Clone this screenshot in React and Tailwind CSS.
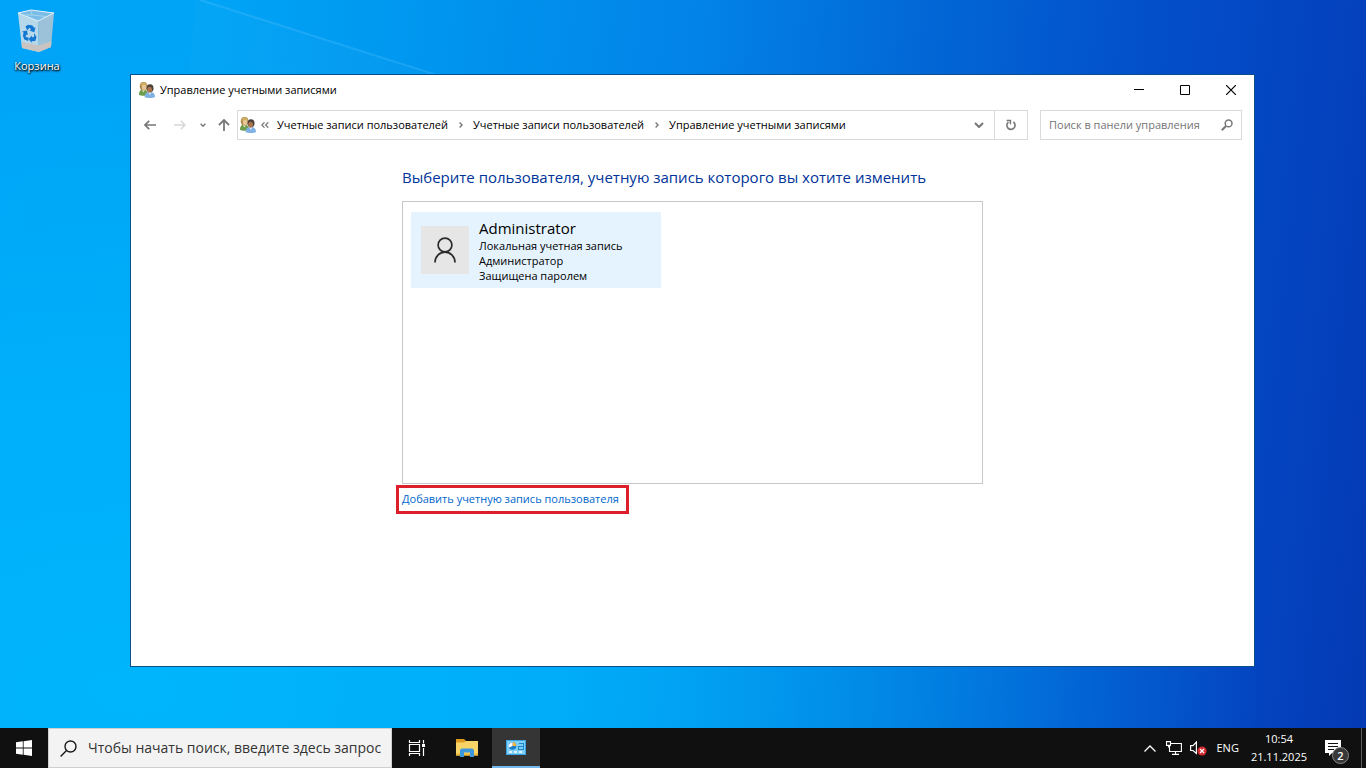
import React from "react";

const crumbs = [
  "Учетные записи пользователей",
  "Учетные записи пользователей",
  "Управление учетными записями",
];

const UsersIcon = () => (
  <svg viewBox="0 0 16 16" className="w-4 h-4 shrink-0">
    <path d="M0 13c0-3.800 1.200-5.600 4.300-5.600S8.800 9.200 8.800 13c-2.200 1-6.600 1-8.800 0z" fill="#6d9c4c" />
    <path d="M2.500 7.800l2 2.700 1.700-2.800z" fill="#d9e8c8" />
    <ellipse cx="4.600" cy="4.200" rx="3.800" ry="4.200" fill="#a98444" />
    <ellipse cx="5.200" cy="5.200" rx="2.400" ry="2.900" fill="#e6c496" />
    <path d="M1.200 3.800C1.500 1.200 2.900.2 4.800.2c1.800 0 3 1 3.300 3-1.800.3-2.900-.4-3.600-.8-.5.8-1.900 1.500-3.300 1.400z" fill="#cdae62" />
    <path d="M5.600 15.200c0-3.700 1.700-5.200 5.200-5.200s5.200 1.500 5.200 5.200c-2.400 1-8 1-10.400 0z" fill="#7fb0e2" />
    <path d="M9.200 10.100l1.700 3 1.600-3z" fill="#e6f1fb" />
    <ellipse cx="11" cy="6.300" rx="3.500" ry="4" fill="#4b4038" />
    <ellipse cx="10.600" cy="7.700" rx="2.400" ry="2.900" fill="#a9744e" />
  </svg>
);

const RecycleBin = () => (
  <svg viewBox="0 0 40 44" className="w-10 h-11">
    <path d="M1 4L14 1l23 3-13 5z" fill="#8ecbf0" />
    <path d="M1 4l20 8 1 31L5 39z" fill="#b7d7eb" />
    <path d="M21 12l16-8-3 34-12 5z" fill="#9cc2da" />
    <path d="M4.500 33L22 36.500 34.500 32l-.5 6-12 5-17-4z" fill="#c9c4c2" />
    <path d="M1 4L14 1l23 3-16 8z" fill="#79bde6" stroke="#e4f3fb" />
    <path d="M14 1.500l1 4.500-8 0M15 6l14 1.500" stroke="#a5d5ef" fill="none" />
    <g fill="#1277d3">
      <path d="M8.500 17.500l2.500-1.700 4.500.7 1.500 2.300 1.500-.5-1.200 5-4.800-1.800 1.500-.8-1.500-2.200-2.200 3z" />
      <path d="M5 22.500l5-1 .8 4.500-1.300-.6-1 2.300 3.200 1-.4 3.200-4-1.300-1.400-3.800.7-3.300z" />
      <path d="M17 24l2.500 4-1.200 4-3.600.3v1.600l-3-3.800 3.200-3.600v1.700l2.200-.1z" />
    </g>
  </svg>
);

const Chevron = ({ className, d = "M1 1l4 4 4-4", box = "0 0 10 6", width = 2 }) => (
  <svg viewBox={box} className={className} fill="none" stroke="currentColor" strokeWidth={width}>
    <path d={d} />
  </svg>
);

const TitleBar = () => (
  <header className="flex items-center h-[30px] pl-2">
    <UsersIcon />
    <h1 className="ml-[5px] text-[11px] leading-4">Управление учетными записями</h1>
    <div className="flex ml-auto h-full">
      <button aria-label="Свернуть" className="w-[46px] flex items-center justify-center hover:bg-gray-200">
        <svg viewBox="0 0 10 10" className="w-[10px] h-[10px]">
          <path d="M0 4.500h10" stroke="#000" />
        </svg>
      </button>
      <button aria-label="Развернуть" className="w-[46px] flex items-center justify-center hover:bg-gray-200">
        <svg viewBox="0 0 10 10" className="w-[10px] h-[10px]" fill="none">
          <path d="M.5.5h9v9h-9z" stroke="#000" />
        </svg>
      </button>
      <button aria-label="Закрыть" className="w-[46px] flex items-center justify-center hover:bg-red-600">
        <svg viewBox="0 0 10 10" className="w-[10px] h-[10px]">
          <path d="M0 0l10 10M10 0L0 10" stroke="#000" strokeWidth="1.200" />
        </svg>
      </button>
    </div>
  </header>
);

const NavBar = () => (
  <nav className="flex items-center mt-[5px] pl-[13px] pr-3 h-[30px] text-[#777]">
    <button aria-label="Назад" className="w-3">
      <svg viewBox="0 0 12 10" className="w-3 h-[10px]" fill="none" stroke="currentColor" strokeWidth="1.700">
        <path d="M12 5H1M5.200.8L1 5l4.200 4.200" />
      </svg>
    </button>
    <button aria-label="Вперед" className="w-3 ml-[18px] text-[#d8d8d8]">
      <svg viewBox="0 0 12 10" className="w-3 h-[10px]" fill="none" stroke="currentColor" strokeWidth="1.500">
        <path d="M0 5h11M6.800.8L11 5 6.800 9.200" />
      </svg>
    </button>
    <button aria-label="Последние расположения" className="w-[6px] ml-[14px]">
      <Chevron className="w-[6px] h-1" width={2.400} />
    </button>
    <button aria-label="Вверх" className="w-3 ml-3">
      <svg viewBox="0 0 12 12" className="w-3 h-3" fill="none" stroke="currentColor" strokeWidth="1.800">
        <path d="M6 12V1M1 6l5-5 5 5" />
      </svg>
    </button>

    {/* Address bar */}
    <div className="flex flex-1 items-center h-full ml-[7px] border border-[#d9d9d9]">
      <div className="flex items-center ml-[2px]">
        <UsersIcon />
        <svg viewBox="0 0 8 6" className="w-2 h-[6px] ml-[5px] mr-2" fill="none" stroke="currentColor" strokeWidth="1.200">
          <path d="M3.500.3L.8 3l2.700 2.700M7.300.3L4.600 3l2.700 2.700" />
        </svg>
      </div>
      <ol className="flex items-center text-[11px] leading-4 text-black">
        {crumbs.map((crumb, i) => (
          <li key={i} className="flex items-center">
            {i > 0 && (
              <Chevron className="w-1 h-[6px] ml-[11px] mr-[10px] text-[#777]" box="0 0 4 6" d="M.6.5L3.100 3 .6 5.500" width={1.400} />
            )}
            <a href="#">{crumb}</a>
          </li>
        ))}
      </ol>
      <button aria-label="Предыдущие расположения" className="ml-auto w-[30px] h-full flex items-center justify-center">
        <Chevron className="w-[10px] h-[6px]" />
      </button>
      <button aria-label="Обновить" className="w-[33px] h-full flex items-center justify-center border-l border-[#d9d9d9]">
        <svg viewBox="0 0 10 12" className="w-[10px] h-3" fill="none" stroke="currentColor" strokeWidth="1.600">
          <path d="M7.400 3A4.100 4.100 0 1 1 2.400 3.100" />
          <path d="M.6 1.500h3.800v3.800" strokeWidth="1.500" />
        </svg>
      </button>
    </div>

    {/* Search */}
    <label className="flex items-center w-[202px] h-full ml-3 pl-2 pr-2 border border-[#d9d9d9]">
      <input
        type="text"
        aria-label="Поиск в панели управления"
        placeholder="Поиск в панели управления"
        className="flex-1 min-w-0 text-[11px] leading-4 outline-none placeholder:text-[#757575]"
      />
      <svg viewBox="0 0 12 12" className="w-3 h-3" fill="none" stroke="currentColor">
        <circle cx="7.600" cy="4.400" r="3.400" strokeWidth="1.500" />
        <path d="M5 7L.8 11.200" strokeWidth="2" />
      </svg>
    </label>
  </nav>
);

const AccountCard = () => (
  <button className="flex items-center w-[250px] h-[76px] pl-[10px] bg-[#e5f3ff] text-left">
    <span className="flex items-center justify-center w-12 h-12 bg-[#e6e6e6]">
      <svg viewBox="0 0 22 26" className="w-[22px] h-[26px]" fill="none" stroke="#2b2b2b" strokeWidth="1.700">
        <circle cx="11" cy="8" r="6.900" />
        <path d="M1 25.500c0-6 4.500-10.300 10-10.300s10 4.300 10 10.300" />
      </svg>
    </span>
    <span className="ml-[10px] text-[11px] leading-[15px]">
      <span className="block text-[15px] leading-5">Administrator</span>
      <span className="block">Локальная учетная запись</span>
      <span className="block">Администратор</span>
      <span className="block">Защищена паролем</span>
    </span>
  </button>
);

const AccountsWindow = () => (
  <section className="absolute top-[74px] right-[111px] bottom-[61px] left-[130px] border border-[#0b4f8a] bg-white text-black">
    <TitleBar />
    <NavBar />
    <main className="w-[581px] mx-auto pt-[25px]">
      <h2 className="text-[15px] leading-6 text-[#003399]">
        Выберите пользователя, учетную запись которого вы хотите изменить
      </h2>
      <div className="h-[283px] mt-3 pt-[10px] pl-2 border border-[#c8c8c8]">
        <AccountCard />
      </div>
      <a
        href="#"
        className="block w-fit -ml-[6px] mt-px pt-[2px] pr-[7px] pb-1 pl-[3px] border-3 border-[#dc1f2b] text-[11px] leading-[17px] text-[#0066cc]"
      >
        Добавить учетную запись пользователя
      </a>
    </main>
  </section>
);

const Taskbar = () => (
  <footer className="flex items-stretch h-10 bg-[#101010] text-white">
    <button aria-label="Пуск" className="w-12 flex items-center justify-center">
      <svg viewBox="0 0 16 16" className="w-4 h-4" fill="#fff">
        <path d="M0 2.300L6.800 1.300v6.300H0zM7.600 1.200L16 0v7.600H7.600zM0 8.400h6.800v6.300L0 13.700zM7.600 8.400H16V16l-8.400-1.200z" />
      </svg>
    </button>
    <label className="flex items-center w-[344px] pl-[11px] bg-[#f3f3f3] border border-[#cfcfcf]">
      <svg viewBox="0 0 17 17" className="w-[17px] h-[17px] shrink-0" fill="none" stroke="#1a1a1a" strokeWidth="1.400">
        <circle cx="10.500" cy="6.500" r="5.500" />
        <path d="M6.500 10.500L.6 16.400" />
      </svg>
      <input
        type="text"
        aria-label="Поиск"
        placeholder="Чтобы начать поиск, введите здесь запрос"
        className="flex-1 min-w-0 ml-[11px] text-[14px] leading-5 outline-none placeholder:text-[#333]"
      />
    </label>
    <button aria-label="Представление задач" className="w-12 mr-[3px] flex items-center justify-center">
      <svg viewBox="0 0 17 16" className="w-[17px] h-4" fill="none" stroke="#fff" strokeWidth="1.200">
        <path d="M1.500 0v2.500h10V0M1.500 16v-2.500h10V16M1.500 4.500h10v7h-10zM15.500 0v3.500M15.500 8V16" />
        <path d="M14 4h3v3h-3z" fill="#fff" stroke="none" />
      </svg>
    </button>
    <button aria-label="Проводник" className="w-12 mr-px flex items-center justify-center">
      <svg viewBox="0 0 22 18" className="w-[22px] h-[18px]">
        <path d="M0 0h8l2 2h11v4H0z" fill="#dd9c20" />
        <path d="M0 3.500h8L10 2h12v14.500H0z" fill="#fbd467" />
        <path d="M0 14.500h22v2H0z" fill="#edb83f" />
        <path d="M4 18v-7l1.500-1.500h11L18 11v7h-4v-4.500H8V18z" fill="#3d97db" />
      </svg>
    </button>
    <button
      aria-label="Панель управления"
      className="w-12 flex items-center justify-center bg-[#353535] border-b-2 border-[#76b9ed]"
    >
      <svg viewBox="0 0 20 15" className="w-5 h-[15px]">
        <rect width="20" height="15" rx="1" fill="#7fd0f7" />
        <path d="M.5.5h19v14H.5z" fill="none" stroke="#3aa3e3" />
        <circle cx="6.500" cy="6" r="3.800" fill="#1d7fc9" />
        <path d="M6.500 6V2.200A3.800 3.800 0 0 1 10.300 6z" fill="#f7b239" />
        <path d="M6.500 6L3 7.500A3.800 3.800 0 0 1 6.500 2.200z" fill="#fff" />
        <path d="M13 3.500h4.500M12.500 6.500h5M12.500 9.500h5M17.500 3v7M12.500 6v4" stroke="#1f86cc" fill="none" />
        <path d="M3 12h3M8 12h3M13 12h3" stroke="#fff" strokeWidth="1.500" />
      </svg>
    </button>

    {/* Tray */}
    <div className="flex items-center ml-auto">
      <button aria-label="Показать скрытые значки">
        <Chevron className="w-3 h-[7px]" box="0 0 12 7" d="M.5 6.500L6 1l5.500 5.500" width={1.300} />
      </button>
      <svg viewBox="0 0 16 14" className="w-4 h-[14px] ml-[10px]" fill="none" stroke="#fff" strokeWidth="1.100">
        <path d="M5 2.500h10.400v8H3.500V5M9.500 10.500v3M6 13.400h7" />
        <path d="M.5.6h4v3.800h-4zM2.500 4.500v2" />
      </svg>
      <svg viewBox="0 0 17 15" className="w-[17px] h-[15px] ml-2" fill="none">
        <path d="M.6 4.600H3L6.400 1v11.500L3 9.500H.6z" stroke="#fff" strokeWidth="1.200" />
        <circle cx="12" cy="10" r="4.600" fill="#d42b30" />
        <path d="M10 8l4 4M14 8l-4 4" stroke="#fff" strokeWidth="1.200" />
      </svg>
      <button className="ml-[9px] text-[11px] leading-4">ENG</button>
      <button className="ml-3 text-[11px] leading-[18px] text-center">
        <span className="block">10:54</span>
        <span className="block">21.11.2025</span>
      </button>
      <button aria-label="Уведомления: 2" className="relative w-4 h-4 ml-[18px]">
        <svg viewBox="0 0 16 16" className="w-4 h-4">
          <path d="M0 0h16v13H7l-3 3v-3H0z" fill="#fff" />
          <path d="M3 3.500h10M3 6.500h10M3 9.500h6" stroke="#101010" />
        </svg>
        <span className="absolute left-[7px] top-[7px] flex items-center justify-center w-[17px] h-[17px] rounded-full border border-[#8a8a8a] bg-[#383838] text-[11px] leading-3 font-semibold">
          2
        </span>
      </button>
      <div className="h-full ml-5 w-[5px] border-l border-[#5a5a5a]"></div>
    </div>
  </footer>
);

const App = () => {
  return (
    <div className="min-h-screen flex flex-col font-['Open_Sans','Noto_Sans',sans-serif]">
      <div className="relative flex-1 overflow-hidden bg-[linear-gradient(96deg,#00a4f8_0%,#00a4f6_15%,#0094ee_32%,#0284e8_48%,#0268d6_64%,#034fca_80%,#0443bf_92%,#043ab4_100%)]">
        <div className="absolute inset-0 bg-[radial-gradient(ellipse_at_10%_95%,#00b5fb_0%,#00b4fbcc_25%,transparent_65%)]"></div>
        {/* Light ray of the wallpaper */}
        <svg viewBox="0 0 440 76" className="absolute top-0 left-0 w-[440px] h-[76px]">
          <path d="M195 0h12l233 76H190z" fill="#fff" opacity="0.020" />
          <path d="M200 0l240 76" stroke="#5cc6ff" strokeWidth="2" opacity="0.250" />
        </svg>
        <a href="#" className="absolute top-[9px] left-0 flex flex-col items-center w-[74px] text-white">
          <RecycleBin />
          <span className="mt-[5px] text-[11px] leading-4 [text-shadow:0_1px_2px_#000,1px_1px_2px_#000]">Корзина</span>
        </a>
        <AccountsWindow />
      </div>
      <Taskbar />
    </div>
  );
};

export default App;
